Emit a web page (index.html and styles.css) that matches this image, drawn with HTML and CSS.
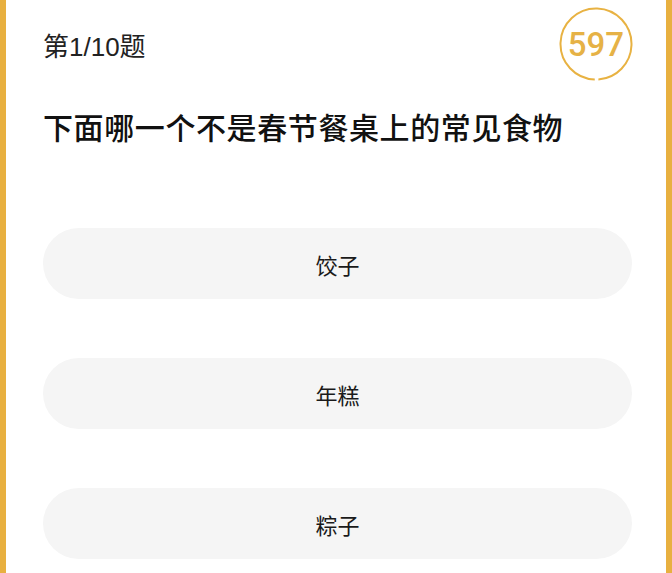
FILE: index.html
```html
<!DOCTYPE html>
<html lang="zh-CN">
  <head>
    <meta charset="UTF-8" />
    <meta name="viewport" content="width=device-width, initial-scale=1.0" />
    <title>答题</title>
    <link rel="stylesheet" href="styles.css">
  </head>
  <body>
    <div class="page">
      <div class="head">
        <span class="step">第1/10题</span>
        <div class="timer">
          <svg width="74" height="74" viewBox="0 0 74 74">
            <circle cx="37" cy="37" r="35.5" fill="none" stroke="#e8b242" stroke-width="2"
              stroke-dasharray="219 4" transform="rotate(92 37 37)" />
          </svg>
          <span class="score">597</span>
        </div>
      </div>
      <h1 class="question">下面哪一个不是春节餐桌上的常见食物</h1>
      <ul class="options">
        <li>饺子</li>
        <li>年糕</li>
        <li>粽子</li>
      </ul>
    </div>
  </body>
</html>
```

FILE: styles.css
```css
* {
  margin: 0;
  padding: 0;
  box-sizing: border-box;
}
html,
body {
  height: 100%;
  background-color: #fff;
  font-family: "Liberation Sans", "Noto Sans CJK SC", sans-serif;
  color: #1a1a1a;
}
.page {
  min-height: 100%;
  border-left: 6px solid #e8b040;
  border-right: 6px solid #e8b040;
  padding: 7px 34px 0 37px;
}
.head {
  display: flex;
  justify-content: space-between;
  align-items: center;
  height: 74px;
}
.step {
  font-size: 26px;
  color: #222;
  margin-top: 1px;
}
.timer {
  position: relative;
  width: 74px;
  height: 74px;
  margin-right: -1px;
}
.timer svg {
  display: block;
}
.score {
  position: absolute;
  inset: 0;
  display: flex;
  align-items: center;
  justify-content: center;
  font-family: Roboto, "Liberation Sans", sans-serif;
  font-size: 33px;
  font-weight: 500;
  color: #e6b246;
}
.question {
  margin-top: 28px;
  font-size: 30px;
  line-height: 40px;
  font-weight: 500;
  color: #111;
  letter-spacing: 0.6px;
}
.options {
  list-style: none;
  margin-top: 79px;
  display: flex;
  flex-direction: column;
  gap: 59px;
}
.options > li {
  height: 71px;
  border-radius: 36px;
  background-color: #f5f5f5;
  display: flex;
  align-items: center;
  justify-content: center;
  font-size: 22px;
  color: #1a1a1a;
}
```
